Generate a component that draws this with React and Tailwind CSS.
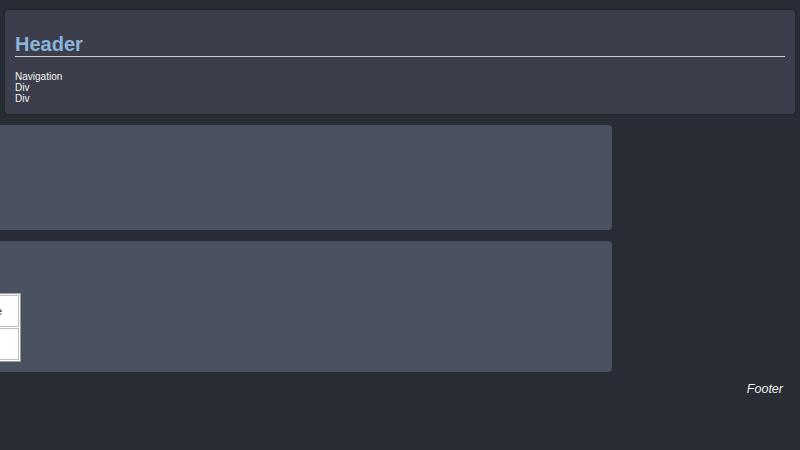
import React from "react";

export default function App() {
  return (
    <div className="min-h-[450px] w-[800px] overflow-hidden bg-[#282c35] font-['Liberation_Sans',Arial,sans-serif] text-white">
      {/* Header */}
      <div className="pt-[10px] px-[5px]">
        <div className="h-[104px] rounded-[4px] bg-[#3c3f4b] px-[10px] pt-[22px] shadow-[0_0_3px_rgba(0,0,0,0.3)]">
          <h1 className="border-b border-[#c8ccd4] text-[20px] font-bold leading-[24px] text-[#8ab4dc]">
            Header
          </h1>
          <div className="mt-[14px] text-[10px] leading-[11px] text-[#f2f2f2]">
            <div>Navigation</div>
            <div>Div</div>
            <div>Div</div>
          </div>
        </div>
      </div>

      {/* Content */}
      <div className="ml-[-120px] mt-[11px] flex w-[732px] flex-col gap-[11px]">
        <div className="h-[105px] rounded-[4px] bg-[#4a5160]" />
        <div className="h-[131px] rounded-[4px] bg-[#4a5160] pt-[52px]">
          <div className="ml-[21px] w-[120px] border border-[#9a9a9a] bg-white p-[1px]">
            <div className="flex h-[32px] items-center justify-end border border-[#bdbdbd] pr-[16px] text-[11px] text-[#333]">
              Name
            </div>
            <div className="mt-[1px] h-[32px] border border-[#bdbdbd]" />
          </div>
        </div>
      </div>

      {/* Footer */}
      <div className="pr-[17px] pt-[9px] text-right text-[12.5px] italic leading-[16px] text-[#f0f0f0]">
        Footer
      </div>
    </div>
  );
}
